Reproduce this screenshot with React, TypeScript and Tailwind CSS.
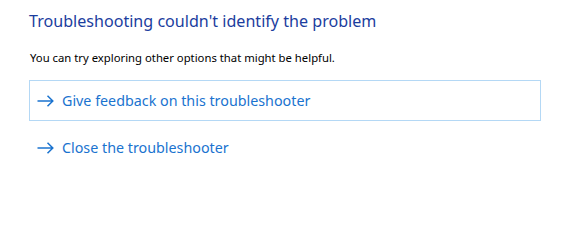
import React from "react";

const Arrow: React.FC = () => (
  <svg width="17" height="12" viewBox="0 0 17 12" fill="none" className="shrink-0">
    <path d="M0.5 6H16M10.5 0.8L15.8 6L10.5 11.2" stroke="currentColor" strokeWidth="1.5" />
  </svg>
);

const LinkRow: React.FC<{ label: string; boxed?: boolean }> = ({ label, boxed }) => (
  <div
    className={`flex h-[41px] items-center gap-[8px] pl-[7px] text-[14.3px] text-[#1a73cf] ${
      boxed ? "border border-[#b4d8f5]" : "border border-transparent"
    }`}
  >
    <Arrow />
    <span>{label}</span>
  </div>
);

export default function App() {
  return (
    <div
      className="h-[247px] w-[564px] bg-white pl-[29px] pr-[23px]"
      style={{ fontFamily: '"Noto Sans", "Open Sans", sans-serif' }}
    >
      <h1 className="pt-[9px] text-[16.1px] leading-[24px] text-[#1b3d9e]">
        Troubleshooting couldn't identify the problem
      </h1>
      <p className="mt-[17px] pl-[1px] text-[11.3px] leading-[16px] text-black">
        You can try exploring other options that might be helpful.
      </p>
      <div className="mt-[14px] flex flex-col gap-[6px]">
        <LinkRow label="Give feedback on this troubleshooter" boxed />
        <LinkRow label="Close the troubleshooter" />
      </div>
    </div>
  );
}
